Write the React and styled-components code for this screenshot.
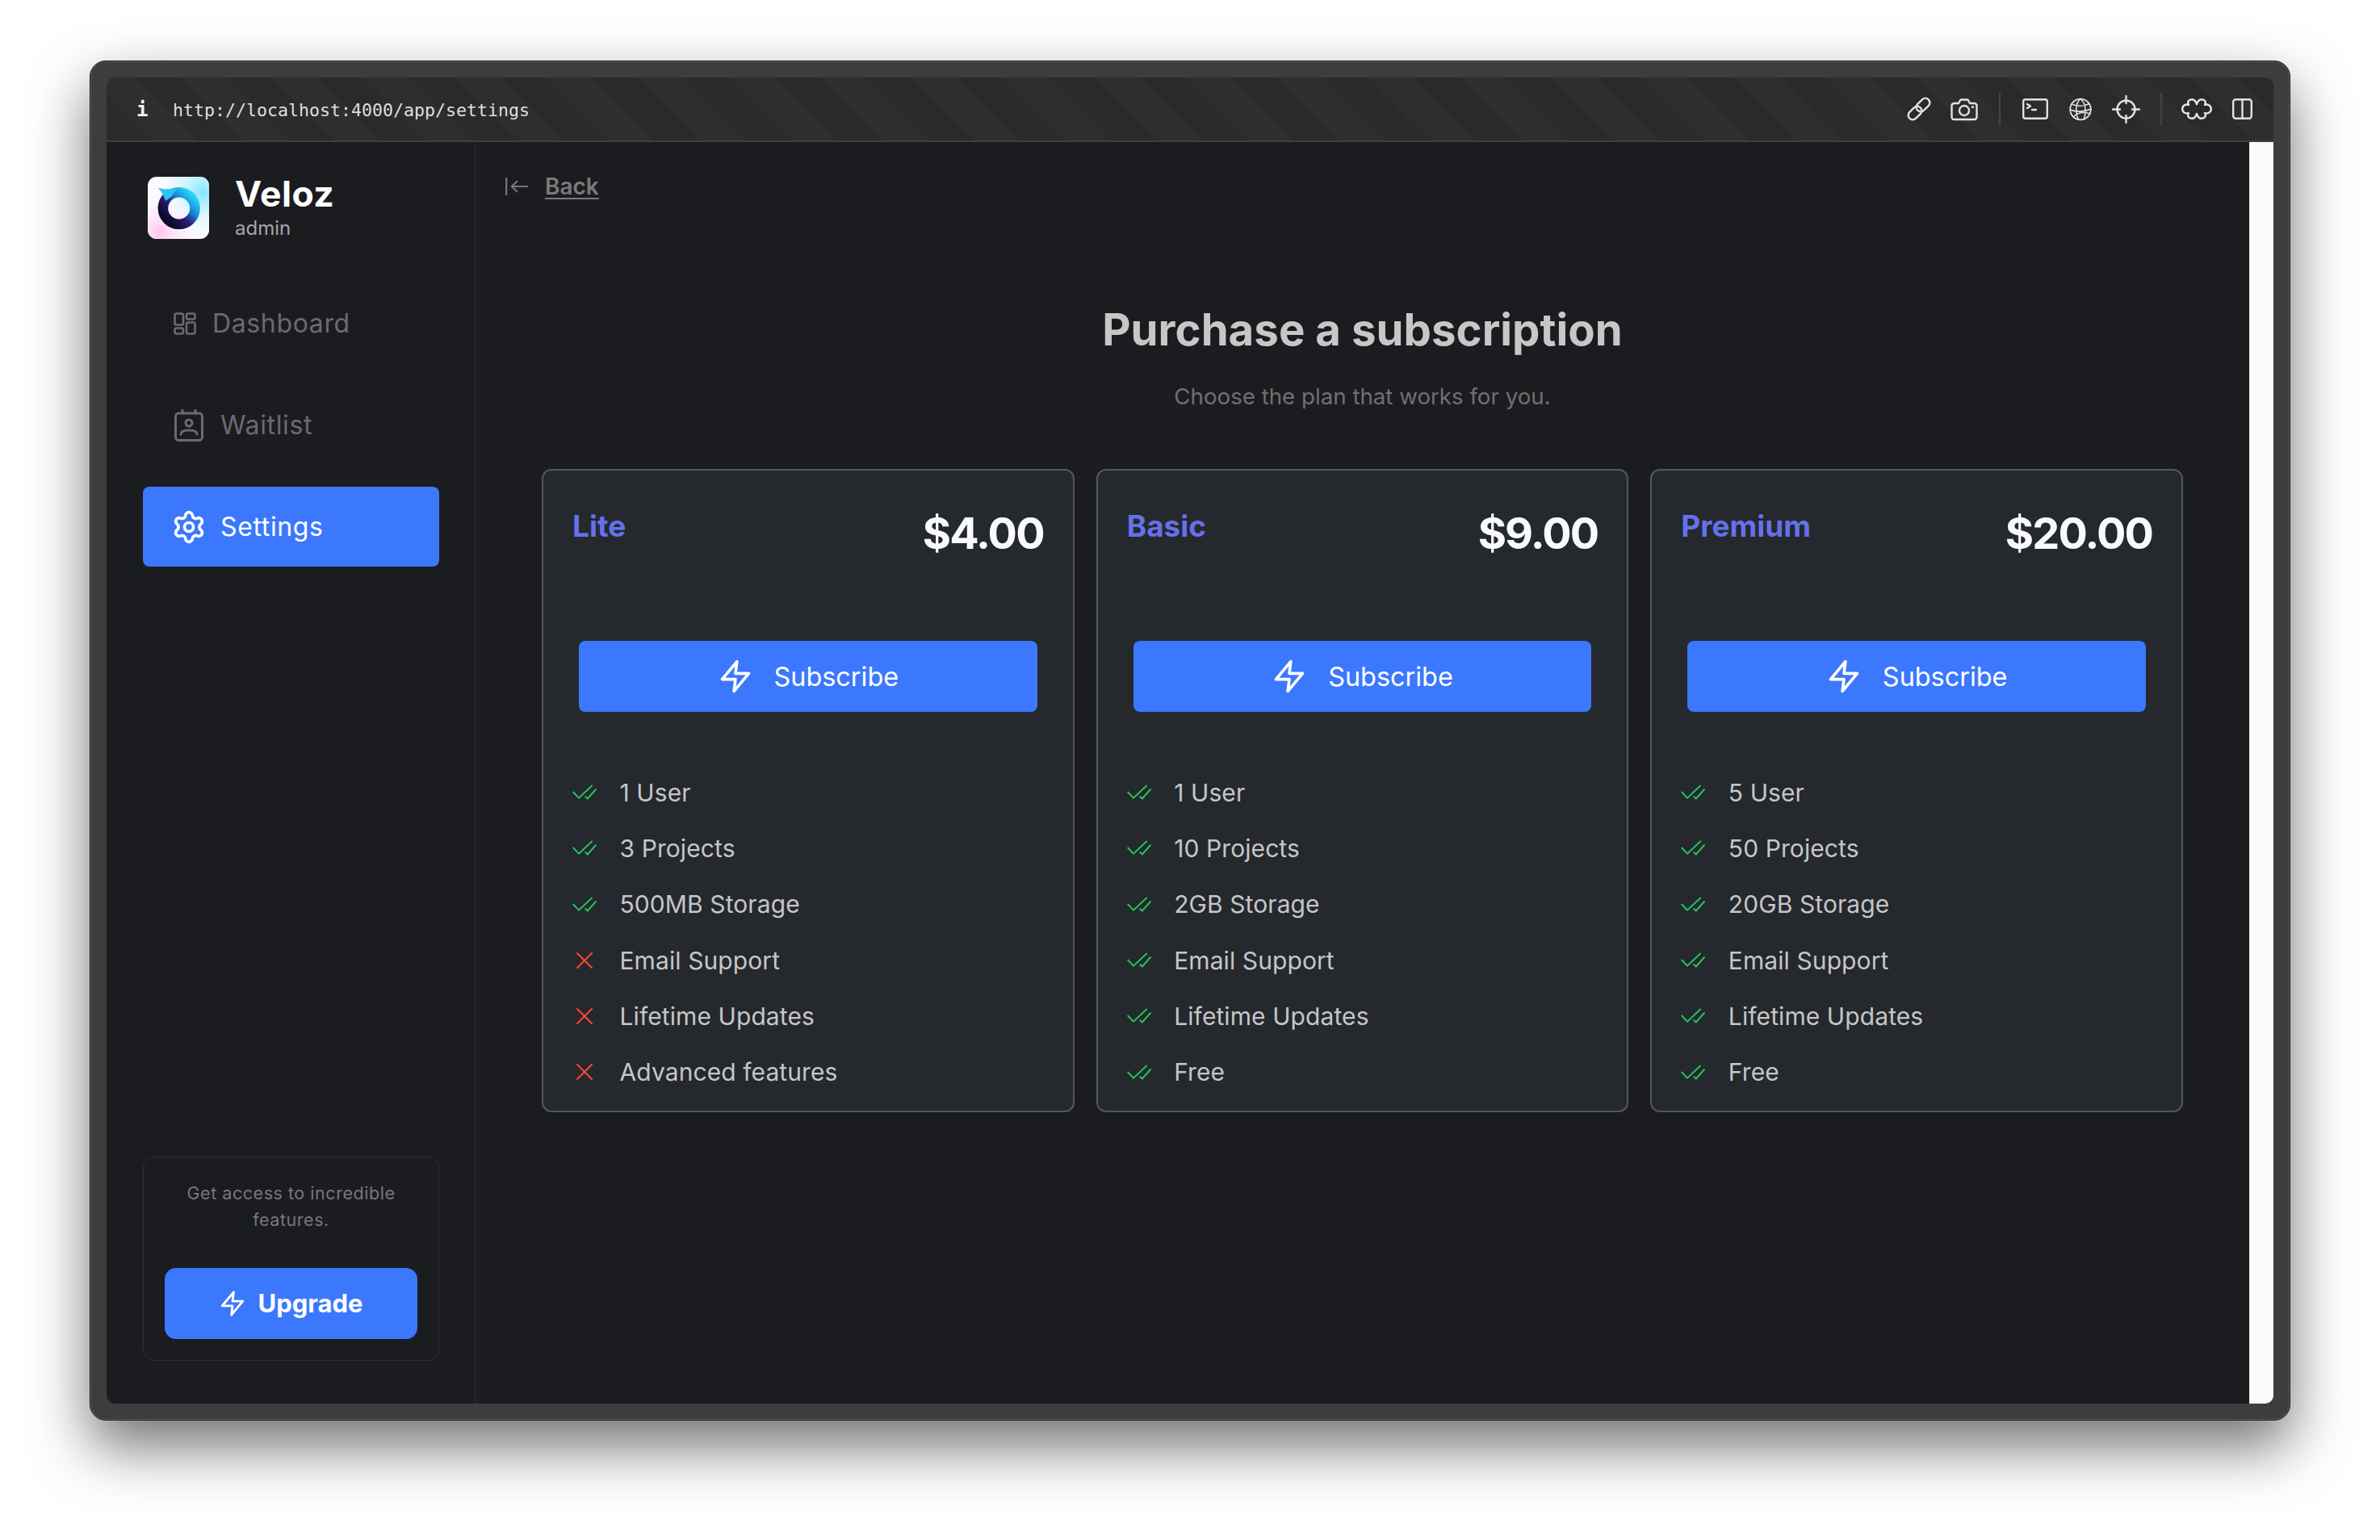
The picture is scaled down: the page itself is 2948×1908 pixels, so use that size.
import React from 'react'
import styled, { createGlobalStyle } from 'styled-components'
import { Settings, X } from 'lucide-react'

const GlobalStyle = createGlobalStyle`
  html, body {
    margin: 0;
    background: #fff;
  }
  * {
    box-sizing: border-box;
  }
`

const plans = [
  {
    name: 'Lite',
    price: '$4.00',
    features: [
      ['1 User', true],
      ['3 Projects', true],
      ['500MB Storage', true],
      ['Email Support', false],
      ['Lifetime Updates', false],
      ['Advanced features', false],
    ],
  },
  {
    name: 'Basic',
    price: '$9.00',
    features: [
      ['1 User', true],
      ['10 Projects', true],
      ['2GB Storage', true],
      ['Email Support', true],
      ['Lifetime Updates', true],
      ['Free', true],
    ],
  },
  {
    name: 'Premium',
    price: '$20.00',
    features: [
      ['5 User', true],
      ['50 Projects', true],
      ['20GB Storage', true],
      ['Email Support', true],
      ['Lifetime Updates', true],
      ['Free', true],
    ],
  },
]

function Bolt({ size }) {
  return (
    <BoltSvg width={size} height={size} viewBox="0 0 24 24">
      <polygon points="13 2 3 14 12 14 11 22 21 10 12 10 13 2" />
    </BoltSvg>
  )
}

function Logo() {
  return (
    <LogoSvg width="76" height="77" viewBox="0 0 76 77">
      <defs>
        <radialGradient id="tileGlowA" cx="0.9" cy="0.25" r="0.8">
          <stop offset="0" stopColor="#7fe6ff" />
          <stop offset="1" stopColor="#ffffff" stopOpacity="0" />
        </radialGradient>
        <radialGradient id="tileGlowB" cx="0.2" cy="0.9" r="0.7">
          <stop offset="0" stopColor="#ffc4ee" />
          <stop offset="1" stopColor="#ffffff" stopOpacity="0" />
        </radialGradient>
        <linearGradient id="ringFill" x1="0.95" y1="0.1" x2="0.15" y2="0.9">
          <stop offset="0" stopColor="#27d6f5" />
          <stop offset="0.35" stopColor="#1784d8" />
          <stop offset="0.62" stopColor="#2a1a78" />
          <stop offset="1" stopColor="#0c0a24" />
        </linearGradient>
      </defs>
      <rect width="76" height="77" rx="11" fill="#fdfbff" />
      <rect width="76" height="77" rx="11" fill="url(#tileGlowA)" />
      <rect width="76" height="77" rx="11" fill="url(#tileGlowB)" />
      <circle cx="38.7" cy="39" r="19.8" fill="none" stroke="url(#ringFill)" strokeWidth="12.6" />
      <path d="M12.5 13.5 C19 16 27 16 38 13 L30 24 L22 30 C20 24 17 18 12.5 13.5Z" fill="#2bc4ee" />
    </LogoSvg>
  )
}

function Checks() {
  return (
    <MarkSvg width="30" height="19" viewBox="0 0 30 19">
      <path d="M0.7 9 L8 16.7 L24.7 1" />
      <path d="M15.7 14.5 L18.8 17.5 L29.5 5.5" />
    </MarkSvg>
  )
}

export default function App() {
  return (
    <Page>
      <GlobalStyle />
      <Frame>
        <Screen>
          <Toolbar>
            <InfoMark>i</InfoMark>
            <Url>http://localhost:4000/app/settings</Url>
            <ToolGroup>
              <ToolIcon>
                <svg width="30" height="30" viewBox="0 0 30 30">
                  <rect x="10.5" y="4.5" width="19" height="11" rx="5.5" transform="rotate(-45 20 10)" />
                  <rect x="0.5" y="14.5" width="19" height="11" rx="5.5" transform="rotate(-45 10 20)" />
                </svg>
              </ToolIcon>
              <ToolIcon>
                <svg width="34" height="27" viewBox="0 0 34 27">
                  <path d="M1.5 9 a3 3 0 0 1 3-3 h5.5 l2.5-4.5 h9 L24 6 h5.5 a3 3 0 0 1 3 3 v14 a3 3 0 0 1-3 3 h-25 a3 3 0 0 1-3-3z" />
                  <circle cx="17" cy="15" r="6" />
                  <circle cx="27.5" cy="10.5" r="0.6" />
                </svg>
              </ToolIcon>
            </ToolGroup>
            <ToolDivider />
            <ToolGroup>
              <ToolIcon>
                <svg width="32" height="26" viewBox="0 0 32 26">
                  <rect x="1.2" y="1.2" width="29.6" height="23.6" rx="2.5" />
                  <path d="M6 7 L10 9.5 L6 12" />
                  <path d="M12 14 H17" />
                </svg>
              </ToolIcon>
              <ToolIcon>
                <svg width="28" height="29" viewBox="0 0 28 29">
                  <circle cx="14" cy="14.5" r="12.8" strokeWidth="1.8" />
                  <path strokeWidth="1.6" d="M14 1.7 C8 6 7 18 11.5 27 M14 1.7 C20 6 22 16 18 27 M3 8 C10 11 18 11 25 7.5 M1.5 15 C9 18 19 18 26.8 14 M5 24 C10 19 17 17 26 20" />
                </svg>
              </ToolIcon>
              <ToolIcon>
                <svg width="33" height="33" viewBox="0 0 33 33">
                  <circle cx="16.5" cy="16.5" r="11" />
                  <path d="M16.5 0 V9 M16.5 24 V33 M0 16.5 H9 M24 16.5 H33" />
                </svg>
              </ToolIcon>
            </ToolGroup>
            <ToolDivider />
            <ToolGroup>
              <ToolIcon>
                <svg width="38" height="26" viewBox="0 0 38 26">
                  <path d="M9 8 C6.5 3 10 1.2 13.5 1.2 C17 1.2 18 4 19 7 C20 4 21 1.2 24.5 1.2 C28 1.2 31.5 3 29 8 C33 6.5 36.8 9 36.8 13 C36.8 17 33 19.5 29 18 C31.5 23 28 24.8 24.5 24.8 C21 24.8 20 22 19 19 C18 22 17 24.8 13.5 24.8 C10 24.8 6.5 23 9 18 C5 19.5 1.2 17 1.2 13 C1.2 9 5 6.5 9 8 Z" />
                </svg>
              </ToolIcon>
              <ToolIcon>
                <svg width="25" height="26" viewBox="0 0 25 26">
                  <rect x="1.2" y="1.2" width="22.6" height="23.6" rx="3" />
                  <path d="M12.5 1.2 V24.8" />
                </svg>
              </ToolIcon>
            </ToolGroup>
          </Toolbar>

          <Body>
            <Sidebar>
              <Brand>
                <Logo />
                <BrandText>
                  <BrandName>Veloz</BrandName>
                  <BrandRole>admin</BrandRole>
                </BrandText>
              </Brand>
              <Nav>
                <NavItem $gap={20} $inset={38}>
                  <NavSvg $thin width="28" height="28" viewBox="0 0 28 28">
                    <rect x="1.5" y="1.5" width="10.5" height="14" rx="2" />
                    <rect x="1.5" y="19.5" width="10.5" height="7" rx="2" />
                    <rect x="16" y="1.5" width="10.5" height="7" rx="2" />
                    <rect x="16" y="12.5" width="10.5" height="14" rx="2" />
                  </NavSvg>
                  Dashboard
                </NavItem>
                <NavItem $gap={21}>
                  <NavSvg width="36" height="40" viewBox="0 0 36 40">
                    <rect x="1.5" y="5" width="33" height="33.5" rx="4" />
                    <path d="M10 1 V5 M26 1 V5" />
                    <circle cx="18" cy="17" r="4" />
                    <path d="M8 31 C8 27 12 26 18 26 S28 27 28 31" />
                  </NavSvg>
                  Waitlist
                </NavItem>
                <NavItem $active $gap={21}>
                  <Settings size={44} strokeWidth={2} style={{ margin: '0 -4px' }} />
                  Settings
                </NavItem>
              </Nav>
              <UpgradeCard>
                <UpgradeText>Get access to incredible features.</UpgradeText>
                <UpgradeButton>
                  <Bolt size={34} />
                  Upgrade
                </UpgradeButton>
              </UpgradeCard>
            </Sidebar>

            <Main>
              <BackRow>
                <svg width="28" height="22" viewBox="0 0 28 22">
                  <path d="M1.2 0 V22 M28 11 H8 M15 4 L8 11 L15 18" />
                </svg>
                <BackLink>Back</BackLink>
              </BackRow>
              <Heading>Purchase a subscription</Heading>
              <Subheading>Choose the plan that works for you.</Subheading>
              <PlanGrid>
                {plans.map((plan) => (
                  <PlanCard key={plan.name}>
                    <PlanHeader>
                      <PlanName>{plan.name}</PlanName>
                      <PlanPrice>{plan.price}</PlanPrice>
                    </PlanHeader>
                    <SubscribeButton>
                      <Bolt size={44} />
                      Subscribe
                    </SubscribeButton>
                    <FeatureList>
                      {plan.features.map(([label, ok]) => (
                        <Feature key={label}>
                          <MarkSlot>
                            {ok ? <Checks /> : <X size={36} color="#f2453d" strokeWidth={1.45} />}
                          </MarkSlot>
                          {label}
                        </Feature>
                      ))}
                    </FeatureList>
                  </PlanCard>
                ))}
              </PlanGrid>
            </Main>
            <ScrollTrack />
          </Body>
        </Screen>
      </Frame>
    </Page>
  )
}

const Page = styled.div`
  width: 2948px;
  height: 1908px;
  padding: 75px 111px 148px;
  background: #fff;
  overflow: hidden;
  font-family: Inter, "Liberation Sans", sans-serif;
`

const Frame = styled.div`
  height: 100%;
  padding: 20px;
  border: 1px solid #1c1c1c;
  border-radius: 20px;
  background: #3d3d3d;
  box-shadow: inset 0 0 0 1px #5c5c5c, 0 32px 72px rgba(0, 0, 0, 0.56);
`

const Screen = styled.div`
  display: flex;
  flex-direction: column;
  height: 100%;
  border-radius: 10px;
  overflow: hidden;
`

const Toolbar = styled.header`
  display: flex;
  align-items: center;
  flex: none;
  height: 80px;
  padding: 0 11px 0 37px;
  border-bottom: 2px solid #3f3f3f;
  background: repeating-linear-gradient(45deg, #2a2a2a 0 40px, #2e2e2e 40px 80px);
`

const InfoMark = styled.span`
  width: 13px;
  margin: 2px 32px 0 0;
  color: #f2f2f2;
  font: 700 24px "DejaVu Sans Mono", monospace;
`

const Url = styled.span`
  flex: 1;
  margin-top: 3px;
  color: #dfdfdf;
  font: 400 21.6px "DejaVu Sans Mono", monospace;
`

const ToolGroup = styled.div`
  display: flex;
`

const ToolIcon = styled.span`
  display: flex;
  align-items: center;
  justify-content: center;
  width: 56px;
  height: 40px;

  svg {
    fill: none;
    stroke: #e2e2e2;
    stroke-width: 2.4;
    stroke-linecap: round;
    stroke-linejoin: round;
    overflow: visible;
  }
`

const ToolDivider = styled.span`
  width: 2px;
  height: 40px;
  margin: 0 15px;
  background: #454545;
`

const Body = styled.div`
  display: flex;
  flex: 1;
  min-height: 0;
  background: #1b1c20;
`

const Sidebar = styled.aside`
  display: flex;
  flex-direction: column;
  flex: none;
  width: 457px;
  padding: 41px 44px 53px 45px;
  border-right: 1px solid #2b2d32;
`

const Brand = styled.div`
  display: flex;
  align-items: center;
  gap: 32px;
  margin: 0 0 54px 6px;
`

const LogoSvg = styled.svg`
  flex: none;
`

const BrandText = styled.div`
  display: flex;
  flex-direction: column;
`

const BrandName = styled.span`
  margin-top: -2px;
  color: #fff;
  font-size: 44.5px;
  font-weight: 700;
  line-height: 50px;
  letter-spacing: 0.01em;
`

const BrandRole = styled.span`
  margin-top: 4px;
  color: #a6a6a6;
  font-size: 24px;
  line-height: 28px;
`

const Nav = styled.nav`
  display: flex;
  flex-direction: column;
  gap: 27px;
`

const NavItem = styled.a`
  display: flex;
  align-items: center;
  gap: ${(props) => props.$gap}px;
  height: 99px;
  padding-left: ${(props) => props.$inset || 39}px;
  border-radius: 8px;
  background: ${(props) => (props.$active ? '#3c78fd' : 'transparent')};
  color: ${(props) => (props.$active ? '#fff' : '#6d6875')};
  font-size: 32px;
  letter-spacing: 0.02em;
`

const NavSvg = styled.svg`
  fill: none;
  stroke: #6d6875;
  stroke-width: ${(props) => (props.$thin ? 2.6 : 3)};
  stroke-linecap: round;
`

const UpgradeCard = styled.div`
  display: flex;
  flex-direction: column;
  height: 253px;
  margin-top: auto;
  padding: 28px 26px 26px;
  border: 1px solid #2d2f33;
  border-radius: 14px;
  text-align: center;
`

const UpgradeText = styled.p`
  margin: 0 auto;
  width: 270px;
  color: #787878;
  font-size: 21.5px;
  line-height: 33px;
  letter-spacing: 0.025em;
`

const UpgradeButton = styled.button`
  display: flex;
  align-items: center;
  justify-content: center;
  gap: 14px;
  height: 88px;
  margin-top: auto;
  padding-bottom: 2px;
  border: 0;
  border-radius: 14px;
  background: #3c78fd;
  color: #fff;
  font: 700 31px Inter, sans-serif;
`

const BoltSvg = styled.svg`
  flex: none;
  fill: none;
  stroke: #fff;
  stroke-width: 2;
  stroke-linejoin: round;
`

const Main = styled.main`
  flex: 1;
  min-width: 0;
  padding: 40px 37px 0;
`

const BackRow = styled.div`
  display: flex;
  align-items: center;
  gap: 21px;
  height: 30px;

  svg {
    fill: none;
    stroke: #777;
    stroke-width: 2.2;
  }
`

const BackLink = styled.a`
  color: #7a7a7a;
  font-size: 28px;
  font-weight: 600;
  text-decoration: underline;
  text-underline-offset: 4px;
`

const Heading = styled.h1`
  margin: 132px 0 0;
  color: #c7c7c7;
  font-size: 54.6px;
  font-weight: 700;
  line-height: 60px;
  text-align: center;
`

const Subheading = styled.p`
  margin: 35px 0 0;
  color: #707070;
  font-size: 27.7px;
  line-height: 36px;
  text-align: center;
`

const PlanGrid = styled.div`
  display: grid;
  grid-template-columns: repeat(3, 1fr);
  gap: 27px;
  margin: 72px 45px 0;
`

const PlanCard = styled.section`
  padding-bottom: 13px;
  border: 2px solid #55575b;
  border-radius: 12px;
  background: #25282d;
`

const PlanHeader = styled.div`
  display: flex;
  justify-content: space-between;
  align-items: flex-start;
  height: 211px;
  padding: 46px 36px 0;
`

const PlanName = styled.h2`
  margin: 0;
  color: #6472ea;
  font-size: 37px;
  font-weight: 700;
  line-height: 46px;
`

const PlanPrice = styled.span`
  color: #f9fafb;
  font-size: 54px;
  font-weight: 700;
  line-height: 64px;
  letter-spacing: -0.035em;
`

const SubscribeButton = styled.button`
  display: flex;
  align-items: center;
  justify-content: center;
  gap: 26px;
  width: calc(100% - 88px);
  height: 88px;
  margin: 0 44px;
  border: 0;
  border-radius: 8px;
  background: #3c78fd;
  color: #fff;
  font: 400 32.4px Inter, sans-serif;
`

const FeatureList = styled.ul`
  margin: 0;
  padding: 65px 36px 0;
  list-style: none;
`

const Feature = styled.li`
  display: flex;
  align-items: center;
  height: 69.3px;
  color: #c5c6c8;
  font-size: 30px;
  letter-spacing: 0.003em;
`

const MarkSlot = styled.span`
  display: flex;
  align-items: center;
  justify-content: center;
  width: 30px;
  margin-right: 28.5px;

  svg {
    flex: none;
  }
`

const MarkSvg = styled.svg`
  fill: none;
  stroke: #22c55e;
  stroke-width: 2;
`

const ScrollTrack = styled.div`
  flex: none;
  width: 30px;
  border-left: 1px solid #ececec;
  background: #fafafa;
`
